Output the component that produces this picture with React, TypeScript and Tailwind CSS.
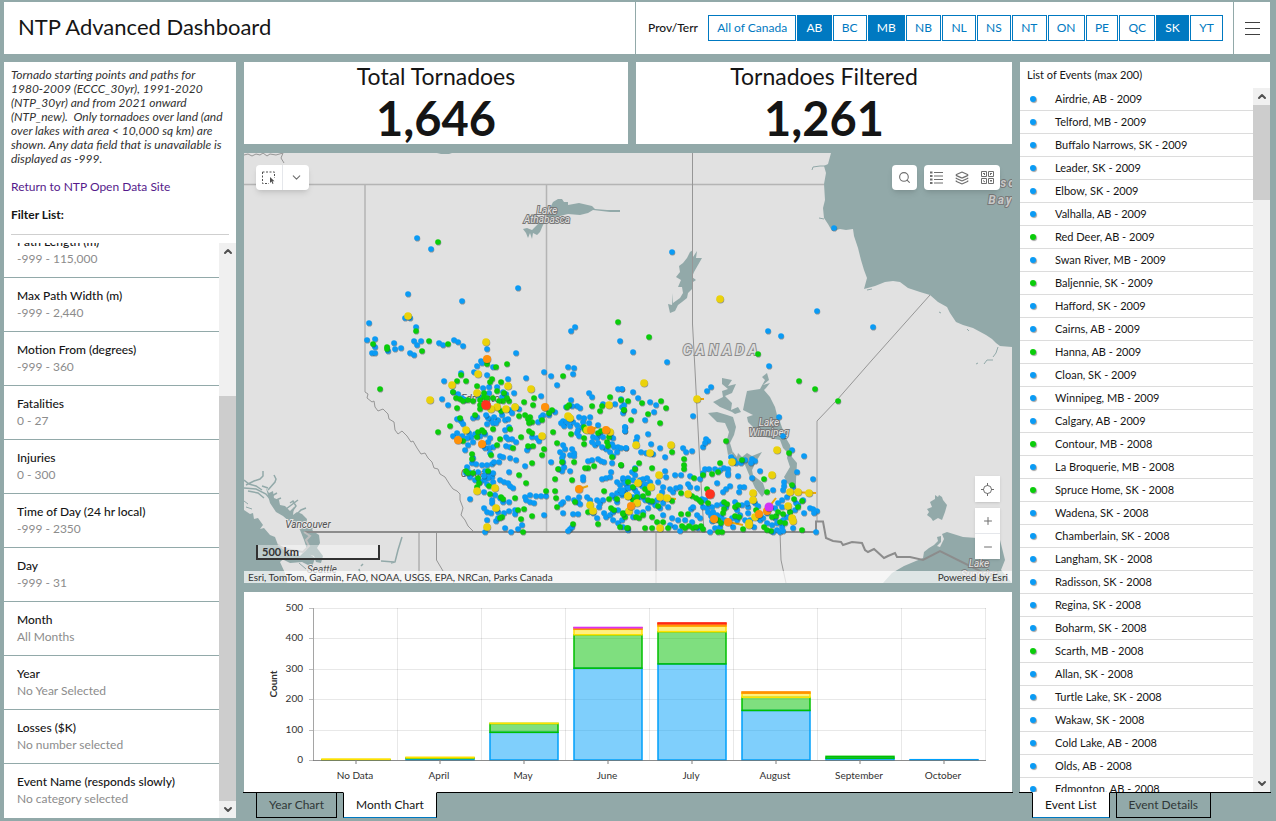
import { ChevronDown, ChevronUp, Layers, Minus, Plus, Search } from 'lucide-react';
import clsx from 'clsx';

const provinces = ['All of Canada', 'AB', 'BC', 'MB', 'NB', 'NL', 'NS', 'NT', 'ON', 'PE', 'QC', 'SK', 'YT'];
const selectedProvinces = ['AB', 'MB', 'SK'];

const filters = [
  { label: 'Path Length (m)', value: '-999 - 115,000' },
  { label: 'Max Path Width (m)', value: '-999 - 2,440' },
  { label: 'Motion From (degrees)', value: '-999 - 360' },
  { label: 'Fatalities', value: '0 - 27' },
  { label: 'Injuries', value: '0 - 300' },
  { label: 'Time of Day (24 hr local)', value: '-999 - 2350' },
  { label: 'Day', value: '-999 - 31' },
  { label: 'Month', value: 'All Months' },
  { label: 'Year', value: 'No Year Selected' },
  { label: 'Losses ($K)', value: 'No number selected' },
  { label: 'Event Name (responds slowly)', value: 'No category selected' },
];

const events = [
  { name: 'Airdrie, AB - 2009' },
  { name: 'Telford, MB - 2009' },
  { name: 'Buffalo Narrows, SK - 2009' },
  { name: 'Leader, SK - 2009' },
  { name: 'Elbow, SK - 2009' },
  { name: 'Valhalla, AB - 2009' },
  { name: 'Red Deer, AB - 2009', strong: true },
  { name: 'Swan River, MB - 2009' },
  { name: 'Baljennie, SK - 2009', strong: true },
  { name: 'Hafford, SK - 2009' },
  { name: 'Cairns, AB - 2009' },
  { name: 'Hanna, AB - 2009', strong: true },
  { name: 'Cloan, SK - 2009' },
  { name: 'Winnipeg, MB - 2009' },
  { name: 'Calgary, AB - 2009' },
  { name: 'Contour, MB - 2008', strong: true },
  { name: 'La Broquerie, MB - 2008' },
  { name: 'Spruce Home, SK - 2008', strong: true },
  { name: 'Wadena, SK - 2008' },
  { name: 'Chamberlain, SK - 2008' },
  { name: 'Langham, SK - 2008' },
  { name: 'Radisson, SK - 2008' },
  { name: 'Regina, SK - 2008' },
  { name: 'Boharm, SK - 2008' },
  { name: 'Scarth, MB - 2008', strong: true },
  { name: 'Allan, SK - 2008' },
  { name: 'Turtle Lake, SK - 2008' },
  { name: 'Wakaw, SK - 2008' },
  { name: 'Cold Lake, AB - 2008' },
  { name: 'Olds, AB - 2008' },
  { name: 'Edmonton, AB - 2008' },
];

// counts per month, stacked from the weakest rating up
const months = [
  { name: 'No Data', counts: [0, 1, 2, 0, 0, 0] },
  { name: 'April', counts: [5, 2, 2, 0, 0, 0] },
  { name: 'May', counts: [91, 29, 1, 0, 0, 0] },
  { name: 'June', counts: [302, 110, 18, 5, 0, 1] },
  { name: 'July', counts: [316, 106, 19, 7, 3, 0] },
  { name: 'August', counts: [163, 43, 14, 4, 0, 0] },
  { name: 'September', counts: [6, 6, 0, 0, 0, 0] },
  { name: 'October', counts: [1, 0, 0, 0, 0, 0] },
];

const ratings = ['#00a0fa', '#00c000', '#ffe100', '#ff9100', '#ff2814', '#dc32f0'];

// tornado starting points as "x,y" pairs, one string per rating
const blue = `417,238 431,249 518,288 408,294 462,301 405,318 410,318 369,323 416,327 367,340 375,339 375,347 372,353 375,353 394,343 395,349 401,348 388,351 414,341 421,341 417,345 410,353 414,355 672,252 834,228 817,311 873,327 768,331 781,336 633,352 769,366 667,362
439,343 443,345 454,340 458,342 463,346 487,349 516,353 571,331 575,327 620,341 481,361 477,366 482,363 493,367 474,372 487,375 461,373 444,381 508,379 526,378 544,372 551,376 568,367 574,368 573,374 557,385 618,389 622,389 541,396 514,393 506,394 442,399 448,405 497,387 489,387 483,388 453,392 458,394 462,398 489,393 502,397 480,397 465,400 503,392
589,393 592,397 571,400 577,406 580,408 572,406 566,407 543,415 549,415 555,412 545,408 541,417 538,422 498,408 510,410 515,406 519,409 512,413 502,415 498,420 494,417 491,420 493,423 488,418 486,415 505,420 508,419 496,423 477,417 473,418 457,419 461,421 463,424 487,424
453,436 457,433 462,436 469,433 471,437 467,438 475,434 480,436 485,434 473,442 490,438 488,442 493,447 489,448 465,450 468,445 490,453 485,448 506,437 508,439 512,439 516,442 506,446 510,447 505,430 509,427 532,437 537,438 539,441 529,447 527,450 500,456 503,457 510,458 516,460 525,466 509,472 473,458 472,463 476,464 482,465 487,465 492,464 494,462 499,462 467,467 469,472 466,473 470,477 478,472 485,471 489,473 492,477 488,478 484,480 493,473 484,476 480,482 487,484 493,482 500,480 504,482 508,483 510,486 513,488 475,480 470,499 484,492 492,500 495,495 500,498 492,503 503,502 509,502 525,497 530,495 536,496 541,496 546,496 526,500 530,502 534,503
484,508 487,512 491,513 498,512 504,513 509,511 515,510 515,514 487,520 496,521 498,518 505,528 511,532 518,529 522,525 485,532 544,515 563,513 573,514 578,514 570,529 572,527 568,531
551,462 563,445 560,452 563,455 562,458 572,449 574,453 570,455 574,456 565,449 563,462 564,467 559,469 562,471 570,471 583,477 583,480 588,461 592,460 598,459 601,461 604,462 612,463 611,472 602,479 606,478 610,477 617,482 620,485 623,480
563,421 561,423 564,426 567,422 570,426 573,422 577,425 578,430 582,427 579,417 584,418 583,422 590,417 589,423 577,433 579,436 593,437 592,442 597,438 600,435 595,445 598,443 603,437 610,435 613,438 612,444 614,447 618,447 606,449 610,452 617,452 613,456 602,447 626,448 625,427 625,431 615,404 622,407 624,405 603,404 598,425
563,502 561,504 568,498 579,497 578,502 580,504 574,500 587,497 590,500 597,500 600,503 603,500 599,507 593,513 604,513 606,517 610,515 597,518 615,498 612,495 617,493 620,490 622,495 625,492 627,487 617,502 613,512 618,510 627,512 613,520 618,523 623,527 628,530
622,389 633,392 621,399 638,398 650,402 656,405 654,412 634,411 623,413 645,420 625,427 625,431 648,434 637,437 636,441 621,448 626,448 651,444 641,452 646,453 653,454 660,448 665,457 683,448 686,452 692,451 703,447 706,439 708,441 705,443 693,416 707,391 711,387 779,417 783,436 792,450 804,456 731,457 734,460 736,463 741,463 745,460 752,459 755,461 751,463 760,471 797,472 813,479 665,471 705,469 709,469 715,469 720,470 724,468 728,469 728,473 728,475 738,476 703,473 752,478 681,475 690,476 700,479 717,483 730,486 726,489 740,487 744,487 723,492 739,492 784,482 784,486 783,490 773,490 793,487
635,468 632,472 635,475 623,478 628,478 633,480 625,483 640,480 643,479 647,478 650,482 645,484 642,486 632,487 628,488 635,490 623,490 622,493 637,493 670,489 673,492 676,488 680,487 688,484 690,487 697,488 663,487 662,492 658,482 666,477 675,475 633,497 640,497 645,500 650,502 655,505 663,503 660,508 668,507 657,500 648,508 643,512 637,512 633,517 622,520 663,515 672,518 678,520 675,527 670,525 680,531 685,520 691,509 693,507 702,499 705,500 697,515 692,522 700,518 698,528 703,507 707,508 712,507 717,505 722,504 726,507 708,512 713,512 711,516 717,515 721,517 712,521 710,532 715,528 720,527 725,520 732,518 737,520 740,515 737,510 733,527 735,502 742,505 748,507 747,503 755,503 758,506 745,520 750,520 754,527 760,520 763,518 767,523 772,525 775,518 777,523 777,530 782,527 787,517 783,520 790,512 795,510 798,505 796,503 803,500 804,513 810,508 813,509 817,511 814,513 782,500 787,497 778,503 775,508 782,507 780,532 783,531 793,528 816,532 773,532 767,513 748,513`;

const green = `438,242 416,331 373,344 387,347 387,349 429,341 422,351 618,322 380,389 649,337 758,354 799,381 815,389 838,401
448,344 461,375 457,381 466,381 453,392 456,398 460,399 457,408 463,401 468,400 473,401 477,386 484,393 484,397 480,400 487,364 496,367 507,364 492,379 490,382 501,382 497,391 504,393 503,401 509,401 507,398 524,402 534,398 533,405 499,401 493,398 480,405 487,398 475,415 480,409 501,411 519,416 525,415 530,417 528,419 532,422 529,423 542,420 552,410 549,413 460,418 450,426 463,441 438,432 478,432 482,430 484,432 477,437 493,429 510,429 500,439 497,445 513,448 521,437 529,431 532,433 528,446 533,446 544,449 542,455 553,432 557,443 491,455 472,454 472,459 532,463 519,475 526,483 466,471 468,473 473,473 488,471 478,478 479,483 477,487 489,486 490,494 501,497 503,499 515,498 518,510 524,509 532,516 521,519 523,532 502,517 500,518
563,376 569,405 567,407 610,397 592,406 602,406 600,411 621,400 624,410 584,427 585,430 571,434 584,438 584,444 598,433 601,431 607,442 608,446 609,437 612,457 621,465 594,466 588,468 585,468 574,462 562,462 558,469 555,479 572,480 546,491 555,491 556,498 557,507 575,502 604,491 573,524 598,524 609,499 617,499 611,508 614,510 588,512 623,513 625,517 620,527 628,528
661,401 666,408 628,401 642,403 624,410 631,420 648,414 660,423 726,441 789,453 742,460 672,452 684,459 684,465 684,469 720,463 639,463 635,469 652,468 621,465 703,475 712,474 718,472 694,478 764,479 792,485 707,489 628,482 633,487 645,489 648,493 643,496 648,500 652,501 637,497 633,500 767,492 681,493 692,496 696,498 699,500 701,502 672,501 658,506 681,514 688,514 623,514 636,517 639,518 643,515 652,517 645,528 652,528 627,528 663,522 657,522 668,528 682,526 685,528 689,526 693,528 696,527 701,526 703,529 708,503 724,502 727,504 724,509 723,513 718,520 721,523 718,532 722,532 735,507 738,505 735,516 739,517 743,529 756,510 764,527 771,531 772,517 776,516 778,512 783,514 780,522 785,523 790,512 798,507 802,501 802,530 794,499 767,530`;

const yellow = `408,316 486,342 430,400 452,385 478,374 508,386 477,393 531,389 497,407 506,409 515,407 466,430 477,491 495,488 496,508 487,527 491,409 542,436 568,416 570,418 609,405 587,430 610,432 590,505 593,511 628,496 720,299 644,383 697,399 636,445 650,453 671,445 732,462 777,450 772,475 659,475 638,483 651,487 628,496 637,503 629,511 660,497 667,498 688,494 660,528 753,493 753,500 755,517 749,523 749,525 790,492 798,492 809,493 788,506 792,518 793,521`;

const orange = '487,359 458,440 482,444 545,407 591,430 606,430 579,489 631,506 714,519 728,522 759,514 767,511';

const dotLayers = [
  { points: blue, color: '#0a9bf5', r: 2.8 },
  { points: green, color: '#0acd0a', r: 2.8 },
  { points: yellow, color: '#ebd20a', r: 3.8 },
  { points: orange, color: '#ff910a', r: 4 },
  { points: '486,405 710,494', color: '#ff321e', r: 4.8 },
  { points: '769,507', color: '#d232f5', r: 4.5 },
];

function MapCanvas() {
  return (
    <svg
      viewBox="244 153 768 430"
      preserveAspectRatio="xMidYMid slice"
      className="absolute inset-0 h-full w-full"
      role="img"
      aria-label="Map of tornado starting points in Western Canada"
    >
      <rect x="244" y="153" width="768" height="430" fill="#e1e1e1" />

      <g fill="#92a9a9">
        {/* Hudson Bay */}
        <path d="M831 153 828 164 824 166 826 173 824 184 825 200 823 208 824 218 828 224 832 231 840 229 846 230 853 229 854 236 858 248 861 260 864 270 867 278 864 289 875 286 885 282 893 281 900 282 908 288 920 292 930 295 938 302 947 307 950 313 956 322 963 325 973 328 986 335 992 339 996 343 1000 346 1012 347V153Z" />
        {/* Lake Athabasca */}
        <path d="M550 208 553 202 558 199 562 199 564 202 568 202 568 205 579 203 592 206 595 209 607 210 620 210 620 212 610 212 593 210 588 213 580 215 568 214 560 216 548 218 543 225 540 232 537 235 533 233 532 239 530 233 528 238 526 233 523 229 527 228 532 230 538 224 545 217Z" />
        <path d="M437 153h15l-3 1h-8Z" />
        {/* Reindeer Lake */}
        <path d="M690 252 693 250 693 257 697 251 696 258 702 258 698 265 694 272 692 277 696 280 693 282 693 288 688 293 687 298 682 302 678 305 675 311 670 313 668 304 672 305 673 293 673 303 680 298 683 293 682 287 678 287 681 280 676 277 680 272 679 266 683 263 687 258Z" />
        {/* Lake Winnipeg */}
        <path d="M747 391 760 389 765 380 762 377 767 373 769 380 763 385 770 383 766 388 764 390 770 397 775 407 777 415 780 422 783 430 787 440 790 445 792 457 797 463 796 480 796 490 788 484 784 477 790 467 787 458 788 453 783 448 780 440 770 438 757 435 753 427 748 422 747 417 753 415 743 410 745 400Z" />
        {/* Cedar Lake, Winnipegosis, Manitoba */}
        <path d="M713 402 723 397 722 391 728 389 722 384 722 378 732 380 728 386 736 384 732 393 725 396 732 403 731 410 738 407 741 412 735 414 732 412 720 407Z" />
        <path d="M708 413 717 412 727 415 733 417 736 427 734 435 730 443 733 453 728 455 726 443 729 432 725 423 717 422 713 418Z" />
        <path d="M730 457 733 452 737 457 738 453 742 457 747 453 752 456 762 452 757 460 752 470 753 475 763 483 766 492 762 497 755 488 750 477 745 465 739 462Z" />
        {/* Lake Nipigon and Lake Superior */}
        <path d="M935 495 938 497 939 495 942 497 943 500 947 505 945 512 942 520 938 518 933 521 931 518 927 515 929 512 927 509 932 507 930 502 935 499Z" />
        <path d="M883 583 892 573 904 566 923 558 924 552 929 548 934 545 938 541 937 537 941 536 941 542 937 546 940 547 944 539 942 534 947 532 963 537 977 538 1000 540 1005 560 1001 570 1012 583Z" />
        {/* Pacific coast */}
        <path d="M244 510 250 514 253 513 254 519 258 518 263 525 260 529 264 528 270 535 275 537 278 545 283 549 290 553 280 562 285 573 287 583H244Z" />
        <path d="M266 488 269 493 273 491 274 498 279 500 280 505 285 506 290 511 294 507 293 515 297 512 302 514 307 519 306 526 311 527 313 531 319 535 320 543 317 548 323 556 321 563 316 562 314 556 304 553 307 549 304 540 300 530 296 523 290 522 283 516 276 512 270 503Z" />
        <path d="M278 547 292 554 300 556 305 551 315 558 312 567 302 562 290 563 280 558Z" />
      </g>

      <g fill="none" stroke="#92a9a9">
        <path
          strokeWidth="1.5"
          d="M244 488 256 489 266 494 271 500M244 480 249 484 256 486 262 490M246 485 254 481 260 479 263 476 263 471M248 491 258 493 264 498M268 490 275 482 276 479 274 475M262 486 268 488M270 497 277 493M274 501 281 498M290 514 296 506 293 501 290 503M286 509 298 500M298 513 301 510 306 508M309 532 313 527 315 528M312 540 318 536M294 519 286 520"
        />
        <path d="M391 563 395 562 398 550 402 537M381 561 394 562M361 566 363 564M359 569 360 573" strokeWidth="1.5" />
        <path d="M306 560 311 570 316 576 321 583M299 563 306 569M244 501 248 504M246 507 252 509M812 170 813 167 820 166 826 166M819 218 824 219M867 290 872 289M939 312 941 313M967 329 969 331M984 364 987 360 993 360M998 347 996 353 993 357M976 364 978 363" />
      </g>

      <g fill="none" stroke="#b4b4b4" strokeWidth="1">
        <path strokeWidth="1.5" d="M244 184.500H824M365 184.500V392M546.500 184.500V532M817 421V522" />
        <path
          stroke="#969696"
          d="M692.500 153V324L695 370 700 467 704 532M817 421 837 400 872 360 930 295M656 532V583M419 532V583M436.500 532V560L443 571M780 532 781 560 786 583"
        />
        <path
          stroke="#969696"
          d="M244 155 248 154 252 156 256 154 260 155 263 153 267 156 270 154 276 155 283 153 281 158 284 163"
        />
        <path
          stroke="#969696"
          d="M365 392 368 394 367 398 372 402 374 401 375 407 378 411 383 409 388 414 389 419 394 422 395 430 398 434 402 431 407 436 411 442 413 441 417 448 421 454 425 453 428 458 432 462 434 468 438 469 440 474 445 477 450 485 453 489 457 491 460 494 460 500 463 508 461 515 465 520 468 526 473 531"
        />
      </g>

      <g fill="none" stroke="#8c8c8c" strokeWidth="2">
        <path d="M304 532H816V521.500H823L826 538 833 541 841 542 843 545 852 542 862 543 865 550 868 552 874 549 884 558 888 556 895 553 897 557 910 557 923 560 940 551 1004 583" />
        <path stroke="#bebebe" d="M304 532 310 536 306 540 309 546 303 552 285 549 278 545" />
      </g>

      <g
        className="font-['Roboto',sans-serif] text-[10px] italic"
        fill="#505050"
        stroke="#e6e6e6"
        strokeWidth="2"
        paintOrder="stroke"
        textAnchor="middle"
      >
        <text x="308" y="528">Vancouver</text>
        <text x="322" y="573">Seattle</text>
        <text x="483" y="402">Edmonton</text>
        <text x="477" y="477">Calgary</text>
        <g fill="#e1e1e1" stroke="#787878">
          <text x="547" y="214">Lake</text>
          <text x="547" y="223">Athabasca</text>
          <text x="769" y="426">Lake</text>
          <text x="769" y="436">Winnipeg</text>
          <text x="979" y="567">Lake</text>
          <text x="979" y="578">Superior</text>
        </g>
        <g className="text-[12px] font-bold tracking-[2px]" fill="#c8c8c8" stroke="#787878">
          <text x="973" y="187" textAnchor="start">Hudson</text>
          <text x="1001" y="204">Bay</text>
        </g>
        <text className="text-[14px] font-bold tracking-[4px]" x="722" y="355" fill="#dcdcdc" stroke="#8c8c8c">
          CANADA
        </text>
      </g>

      <path
        d="M458 440 465 434M579 489 588 486M697 399 704 399M667 498 676 499M714 519 743 525M790 492 816 493M769 507 776 498M591 430 599 426"
        stroke="#eba50a"
        strokeWidth="2"
      />

      {dotLayers.map((layer) => (
        <g key={layer.color}>
          {layer.points.split(/\s+/).map((point, i) => {
            const [x, y] = point.split(',').map(Number);
            return (
              <g key={i}>
                <circle cx={x + 0.5} cy={y + 0.8} r={layer.r} fill="#28323c" opacity="0.45" />
                <circle cx={x} cy={y} r={layer.r} fill={layer.color} />
              </g>
            );
          })}
        </g>
      ))}
    </svg>
  );
}

function MonthChart() {
  const yFor = (count: number) => 760 - count * 0.304;

  return (
    <svg viewBox="244 592 768 200" className="block h-full w-full" role="img" aria-label="Tornado count by month">
      <g stroke="#000" strokeOpacity="0.09">
        {[100, 200, 300, 400, 500].map((tick) => (
          <path key={tick} d={`M314 ${Math.round(yFor(tick)) + 0.5}H986`} />
        ))}
        {[1, 2, 3, 4, 5, 6, 7, 8].map((n) => (
          <path key={n} d={`M${313.5 + n * 84} 608V760`} />
        ))}
      </g>

      {months.map((month, m) => {
        let total = 0;
        return (
          <g key={month.name}>
            {month.counts.map((count, i) => {
              if (!count) return null;
              total += count;
              return (
                <rect
                  key={i}
                  x={322 + m * 84}
                  y={yFor(total)}
                  width="68"
                  height={count * 0.304}
                  fill={ratings[i]}
                  fillOpacity="0.5"
                  stroke={ratings[i]}
                  strokeWidth="1.5"
                />
              );
            })}
            <path d={`M${356 + m * 84} 760V764`} stroke="#bebebe" strokeWidth="2" />
            <text x={355 + m * 84} y="779" textAnchor="middle" className="text-[10px]" fill="#323232">
              {month.name}
            </text>
          </g>
        );
      })}

      {[0, 100, 200, 300, 400, 500].map((tick) => (
        <g key={tick}>
          <path d={`M309 ${Math.round(yFor(tick)) + 0.5}H314`} stroke="#bebebe" />
          <text x="303" y={yFor(tick) + 3} textAnchor="end" className="text-[10px]" fill="#323232">
            {tick}
          </text>
        </g>
      ))}
      <path d="M313.500 608V760" stroke="#a5a5a5" />
      <path d="M313 760.500H986" stroke="#6e6e6e" strokeOpacity="0.8" />
      <text transform="translate(277 684) rotate(-90)" textAnchor="middle" className="text-[10px] font-bold" fill="#323232">
        Count
      </text>
    </svg>
  );
}

function ScrollTrack({ children }: { children: React.ReactNode }) {
  return (
    <div className="flex w-[17px] shrink-0 flex-col bg-[#f0f0f0]" aria-hidden="true">
      <ChevronUp className="mx-auto h-[17px] w-3 text-[#505050]" strokeWidth={4} />
      <div className="flex min-h-0 flex-1 flex-col">{children}</div>
      <ChevronDown className="mx-auto h-[17px] w-3 text-[#505050]" strokeWidth={4} />
    </div>
  );
}

function Tabs({ tabs, active }: { tabs: string[]; active: string }) {
  return (
    <div role="tablist" className="-mx-px flex h-[26px] shrink-0 gap-1.5 border-t border-black pl-[13px]">
      {tabs.map((tab) => (
        <button
          key={tab}
          type="button"
          role="tab"
          aria-selected={tab === active}
          className={clsx(
            '-mt-px h-[26px] border px-3 text-[12px] leading-6',
            tab === active
              ? 'border-x-black border-t-white border-b-[#0079c1] bg-white text-[#151515]'
              : 'border-black text-[#303838]'
          )}
        >
          {tab}
        </button>
      ))}
    </div>
  );
}

function Indicator({ title, value }: { title: string; value: string }) {
  return (
    <section className="flex h-[82px] flex-col items-center bg-white text-[#151515]">
      <h2 className="text-[23px] leading-7">{title}</h2>
      <p className="text-[47px] leading-[56px] font-bold">{value}</p>
    </section>
  );
}

export default function App() {
  return (
    <div className="flex h-screen min-h-[600px] flex-col gap-2 overflow-hidden bg-[#92a9a9] pt-0.5 pr-1.5 pb-[3px] pl-1 font-['Lato',sans-serif] text-[12px] text-[#151515]">
      <header className="flex h-[52px] shrink-0 bg-white">
        <h1 className="flex flex-1 items-center pb-1 pl-3.5 text-[22px]">NTP Advanced Dashboard</h1>
        <div className="flex w-[599px] items-center gap-2.5 border-x border-[#92a9a9] pr-2.5 pl-3">
          <span className="font-medium">Prov/Terr</span>
          <div className="flex flex-1 gap-px" role="group" aria-label="Province or territory">
            {provinces.map((province) => (
              <button
                key={province}
                type="button"
                aria-pressed={selectedProvinces.includes(province)}
                className={clsx(
                  'h-[26px] flex-auto border border-[#0079c1] whitespace-nowrap',
                  selectedProvinces.includes(province) ? 'bg-[#0079c1] text-white' : 'bg-white text-[#0079c1]'
                )}
              >
                {province}
              </button>
            ))}
          </div>
        </div>
        <button type="button" aria-label="Menu" className="flex w-9 items-center justify-center">
          <svg width="15" height="13" viewBox="0 0 15 13" stroke="#404040">
            <path d="M0 .5h15M0 6.500h15M0 12.500h15" />
          </svg>
        </button>
      </header>

      <div className="flex min-h-0 flex-1 gap-2">
        <aside className="flex w-[232px] shrink-0 flex-col bg-white">
          <div className="mx-[7px] border-b border-[#cfcfcf] pt-1.5 pb-3 text-[12px] leading-[14px]">
            <p className="text-[#323232] italic">
              Tornado starting points and paths for 1980-2009 (ECCC_30yr), 1991-2020 (NTP_30yr) and from 2021 onward
              (NTP_new).&nbsp; Only tornadoes over land (and over lakes with area &lt; 10,000 sq km) are shown. Any data
              field that is unavailable is displayed as -999.
            </p>
            <a href="#open-data" className="mt-3.5 block text-[#551a8b]">
              Return to NTP Open Data Site
            </a>
            <h2 className="mt-3.5 font-bold">Filter List:</h2>
          </div>
          <div className="mt-2 flex min-h-0 flex-1">
            <div className="flex min-w-0 flex-1 flex-col justify-end overflow-hidden">
              {filters.map((filter) => (
                <button
                  key={filter.label}
                  type="button"
                  className="flex h-[54px] shrink-0 flex-col border-b border-[#92a9a9] px-[13px] pt-[9px] text-left leading-[17px] last:border-b-0"
                >
                  <span className="font-medium">{filter.label}</span>
                  <span className="text-[#8c8c8c]">{filter.value}</span>
                </button>
              ))}
            </div>
            <ScrollTrack>
              <div className="flex-[136]" />
              <div className="flex-[405] bg-[#cdcdcd]" />
            </ScrollTrack>
          </div>
        </aside>

        <main className="flex min-w-0 flex-1 flex-col">
          <div className="grid shrink-0 grid-cols-[384fr_376fr] gap-2">
            <Indicator title="Total Tornadoes" value="1,646" />
            <Indicator title="Tornadoes Filtered" value="1,261" />
          </div>

          <section className="relative my-[9px] min-h-0 flex-1 overflow-hidden text-[#6e6e6e]">
            <MapCanvas />
            <div className="absolute top-3 left-3 flex h-[25px] divide-x divide-gray-200 rounded-sm bg-white shadow-md">
              <button type="button" aria-label="Select by rectangle" className="flex w-[27px] items-center justify-center">
                <svg width="14" height="14" viewBox="0 0 14 14" fill="none" stroke="#505050">
                  <path d="M.5 1h12v6M.5 1v11.500H7" strokeDasharray="2 1.500" />
                  <path d="M8 6v6l1.500-1.500 1 2.500 1-.5-1-2.300h2Z" fill="#505050" stroke="none" />
                </svg>
              </button>
              <button type="button" aria-label="Selection options" className="flex w-[26px] items-center justify-center">
                <ChevronDown size={13} />
              </button>
            </div>
            <div className="absolute top-3 right-3 flex h-[25px] gap-[7px]">
              <button type="button" aria-label="Search" className="flex w-[25px] items-center justify-center rounded-sm bg-white shadow-md">
                <Search size={13} strokeWidth={2} />
              </button>
              <div className="flex rounded-sm bg-white shadow-md">
                <button type="button" aria-label="Legend" className="flex w-[25px] items-center justify-center">
                  <svg width="13" height="13" viewBox="0 0 13 13" stroke="#6e6e6e">
                    <path d="M4 1.500h9M4 5h9M4 8.500h9M4 12h9" />
                    <path d="M0 1.500h2.500M0 5h2.500M0 8.500h2.500M0 12h2.500" strokeWidth="2" />
                  </svg>
                </button>
                <button type="button" aria-label="Layers" className="flex w-[26px] items-center justify-center">
                  <Layers size={14} strokeWidth={2} />
                </button>
                <button type="button" aria-label="Basemaps" className="flex w-[25px] items-center justify-center">
                  <svg width="13" height="13" viewBox="0 0 13 13" fill="none" stroke="#6e6e6e">
                    <path d="M.5.5h5v5h-5ZM7.500.5h5v5h-5ZM.5 7.500h5v5h-5ZM7.500 7.500h5v5h-5Z" />
                    <path d="M2 2l2 2M4 2l-1 1M9 4l2-2M9 2.500h1M2 9.500l2 1.500M9 9.500h2M10 9v2" />
                  </svg>
                </button>
              </div>
            </div>
            <div className="absolute right-3 bottom-6 flex w-[25px] flex-col gap-1.5">
              <button type="button" aria-label="Find my location" className="flex h-[26px] items-center justify-center bg-white shadow">
                <svg width="13" height="13" viewBox="0 0 13 13" fill="none" stroke="#6e6e6e">
                  <circle cx="6.500" cy="6.500" r="4" />
                  <path d="M6.500 0v3M6.500 10v3M0 6.500h3M10 6.500h3" />
                </svg>
              </button>
              <div className="flex flex-col divide-y divide-gray-200 bg-white shadow">
                <button type="button" aria-label="Zoom in" className="flex h-[26px] items-center justify-center">
                  <Plus size={12} strokeWidth={2} />
                </button>
                <button type="button" aria-label="Zoom out" className="flex h-[25px] items-center justify-center">
                  <Minus size={12} strokeWidth={2} />
                </button>
              </div>
            </div>
            <div className="absolute bottom-[23px] left-3 h-[15px] w-[124px] border-x-2 border-b-2 border-[#323232] bg-white/40 pl-1 text-[11px] leading-[14px] font-bold text-[#323232]">
              500 km
            </div>
            <div className="absolute inset-x-0 bottom-0 flex h-3 justify-between bg-white/70 px-1 text-[10px] leading-3 text-[#323232]">
              <span>Esri, TomTom, Garmin, FAO, NOAA, USGS, EPA, NRCan, Parks Canada</span>
              <span>Powered by Esri</span>
            </div>
          </section>

          <section className="h-[200px] shrink-0 bg-white">
            <MonthChart />
          </section>
          <Tabs tabs={['Year Chart', 'Month Chart']} active="Month Chart" />
        </main>

        <aside className="flex w-[250px] shrink-0 flex-col">
          <h2 className="h-[26px] shrink-0 bg-white pl-[7px] text-[11px] leading-[26px]">List of Events (max 200)</h2>
          <div className="flex min-h-0 flex-1 bg-white">
            <ul className="min-w-0 flex-1 overflow-hidden text-[11px]">
              {events.map((event) => (
                <li key={event.name} className="flex h-[23px] items-center border-b border-[#dcdcdc] pl-2.5">
                  <span
                    className={clsx(
                      'mr-[19px] h-1.5 w-1.5 rounded-full shadow-[1px_1px_1px_#a0a0a0]',
                      event.strong ? 'bg-[#0acd0a]' : 'bg-[#0a9bf5]'
                    )}
                  />
                  {event.name}
                </li>
              ))}
            </ul>
            <ScrollTrack>
              <div className="flex-[95] bg-[#cdcdcd]" />
              <div className="flex-[575]" />
            </ScrollTrack>
          </div>
          <Tabs tabs={['Event List', 'Event Details']} active="Event List" />
        </aside>
      </div>
    </div>
  );
}
